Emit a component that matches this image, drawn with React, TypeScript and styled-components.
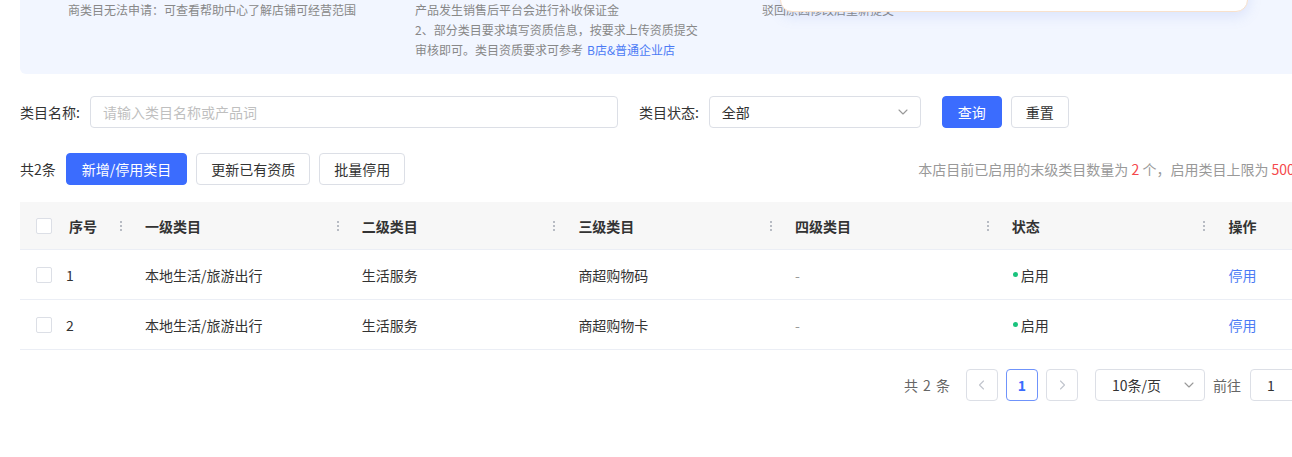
import React from 'react';
import styled, { createGlobalStyle } from 'styled-components';

const GlobalStyle = createGlobalStyle`
  html, body {
    margin: 0;
    padding: 0;
    overflow: hidden;
    background: #fff;
  }
  body {
    font-family: "Noto Sans CJK SC", "Noto Sans", sans-serif;
    color: #333;
  }
  * {
    box-sizing: border-box;
  }
`;

const BLUE = '#3b6cfe';

const Page = styled.div`
  width: 1332px;
  padding: 0 20px;
`;

const NoticePanel = styled.section`
  position: relative;
  display: grid;
  grid-template-columns: repeat(3, 347px);
  padding: 0 0 14px 48px;
  background: #f2f6ff;
  border-radius: 0 0 6px 6px;
  font-size: 12px;
  line-height: 20px;
  color: #888;
`;

const NoticeCol = styled.div`
  white-space: nowrap;
`;

const NoticeLink = styled.a`
  color: #4c7bf5;
  text-decoration: none;
  margin-left: 4px;
`;

const FloatCard = styled.div`
  position: absolute;
  left: 760px;
  top: -40px;
  width: 468px;
  height: 52px;
  background: #fff;
  border: 1px solid #f8e1cc;
  border-radius: 12px;
  box-shadow: 0 4px 14px rgba(110, 140, 230, 0.18);
`;

const FormRow = styled.div`
  display: flex;
  align-items: center;
  margin-top: 22px;
  height: 32px;
`;

const Field = styled.label`
  display: flex;
  align-items: center;
  gap: 10px;
  font-size: 14px;
  color: #333;
  margin-right: 21px;
`;

const TextInput = styled.div<{ $w: number }>`
  width: ${(p) => p.$w}px;
  height: 32px;
  border: 1px solid #dcdfe6;
  border-radius: 4px;
  display: flex;
  align-items: center;
  justify-content: space-between;
  padding: 0 10px 0 12px;
  font-size: 14px;
  color: #333;
  background: #fff;
`;

const Placeholder = styled.span`
  color: #bfbfbf;
`;

const Button = styled.button<{ $primary?: boolean }>`
  height: 32px;
  padding: 0 ${(p) => (p.$primary ? 15 : 14)}px;
  border-radius: 4px;
  font-family: inherit;
  font-size: 14px;
  cursor: pointer;
  border: 1px solid ${(p) => (p.$primary ? BLUE : '#dcdfe6')};
  background: ${(p) => (p.$primary ? BLUE : '#fff')};
  color: ${(p) => (p.$primary ? '#fff' : '#333')};
`;

const ButtonGroup = styled.div`
  display: flex;
  gap: 9px;
`;

const ActionRow = styled.div`
  display: flex;
  align-items: center;
  margin-top: 25px;
  height: 32px;
  gap: 9px;
  font-size: 14px;
`;

const Summary = styled.div`
  margin-left: auto;
  color: #999;
  white-space: nowrap;
`;

const Red = styled.span`
  color: #f5484c;
`;

const Table = styled.div`
  margin-top: 17px;
  font-size: 14px;
`;

const TableRow = styled.div<{ $head?: boolean }>`
  display: grid;
  grid-template-columns: 109px repeat(5, 216.7px) 1fr;
  height: ${(p) => (p.$head ? 48 : 50)}px;
  align-items: center;
  background: ${(p) => (p.$head ? '#f7f7f7' : '#fff')};
  border-bottom: 1px solid #ebeef5;
  font-weight: ${(p) => (p.$head ? 600 : 400)};
  color: #333;
`;

const Cell = styled.div<{ $muted?: boolean; $link?: boolean }>`
  position: relative;
  display: flex;
  align-items: center;
  padding-left: 16px;
  height: 100%;
  white-space: nowrap;
  color: ${(p) => (p.$link ? '#4c7bf5' : p.$muted ? '#999' : 'inherit')};
`;

const SelectCell = styled(Cell)<{ $head?: boolean }>`
  gap: ${(p) => (p.$head ? 17 : 14)}px;
`;

const StatusCell = styled(Cell)`
  padding-left: 17px;
`;

const Divider = styled.span`
  position: absolute;
  right: 7px;
  top: 18px;
  width: 2px;
  height: 12px;
  background: radial-gradient(circle, #b8bcc4 45%, transparent 55%) 0 0 / 2px 4px repeat-y;
`;

const Checkbox = styled.span`
  display: inline-block;
  width: 16px;
  height: 16px;
  border: 1px solid #dcdfe6;
  border-radius: 2px;
  background: #fff;
  flex-shrink: 0;
`;

const StatusDot = styled.span`
  display: inline-block;
  width: 5px;
  height: 5px;
  border-radius: 50%;
  background: #19c37d;
  margin-right: 3px;
`;

const Pager = styled.div`
  display: flex;
  align-items: center;
  justify-content: flex-end;
  margin-top: 19px;
  margin-right: -6px;
  height: 32px;
  font-size: 14px;
  color: #666;
`;

const PagerTotal = styled.span`
  margin-right: 16px;
  word-spacing: 2px;
`;

const PageBtn = styled.div<{ $active?: boolean }>`
  width: 32px;
  height: 32px;
  border-radius: 4px;
  border: 1px solid ${(p) => (p.$active ? '#6f93fb' : '#dcdfe6')};
  color: ${(p) => (p.$active ? BLUE : '#b4b4b4')};
  font-weight: ${(p) => (p.$active ? 600 : 400)};
  display: flex;
  align-items: center;
  justify-content: center;
  margin-right: 8px;
  background: #fff;
`;

const PagerSelect = styled.div`
  width: 110px;
  height: 32px;
  border: 1px solid #dcdfe6;
  border-radius: 4px;
  display: flex;
  align-items: center;
  justify-content: space-between;
  padding: 0 8px 0 16px;
  margin-left: 9px;
  color: #333;
`;

const JumpLabel = styled.span`
  margin: 0 9px 0 8px;
`;

const JumpInput = styled.div`
  width: 46px;
  height: 32px;
  border: 1px solid #dcdfe6;
  border-radius: 4px;
  display: flex;
  align-items: center;
  padding-left: 16px;
  color: #333;
  margin-right: 8px;
`;

const Chevron = ({ dir = 'down', color = '#999' }: { dir?: 'down' | 'left' | 'right'; color?: string }) => {
  const d = dir === 'down' ? 'M3 5l4 4 4-4' : dir === 'left' ? 'M8.5 3L4.5 7l4 4' : 'M5.5 3l4 4-4 4';
  return (
    <svg width="14" height="14" viewBox="0 0 14 14" fill="none">
      <path d={d} stroke={color} strokeWidth="1.1" strokeLinecap="round" strokeLinejoin="round" />
    </svg>
  );
};

const headers = ['一级类目', '二级类目', '三级类目', '四级类目', '状态', '操作'];

const rows = [
  { id: 1, l1: '本地生活/旅游出行', l2: '生活服务', l3: '商超购物码', l4: '-' },
  { id: 2, l1: '本地生活/旅游出行', l2: '生活服务', l3: '商超购物卡', l4: '-' },
];

const App = () => (
  <Page>
    <GlobalStyle />
    <NoticePanel>
      <NoticeCol>商类目无法申请：可查看帮助中心了解店铺可经营范围</NoticeCol>
      <NoticeCol>
        产品发生销售后平台会进行补收保证金
        <br />
        2、部分类目要求填写资质信息，按要求上传资质提交
        <br />
        审核即可。类目资质要求可参考
        <NoticeLink>B店&amp;普通企业店</NoticeLink>
      </NoticeCol>
      <NoticeCol>驳回原因修改后重新提交</NoticeCol>
      <FloatCard />
    </NoticePanel>

    <FormRow>
      <Field>
        类目名称:
        <TextInput $w={528}>
          <Placeholder>请输入类目名称或产品词</Placeholder>
        </TextInput>
      </Field>
      <Field>
        类目状态:
        <TextInput $w={212}>
          全部
          <Chevron />
        </TextInput>
      </Field>
      <ButtonGroup>
        <Button $primary>查询</Button>
        <Button>重置</Button>
      </ButtonGroup>
    </FormRow>

    <ActionRow>
      <span style={{ marginRight: 1 }}>共2条</span>
      <Button $primary>新增/停用类目</Button>
      <Button>更新已有资质</Button>
      <Button>批量停用</Button>
      <Summary>
        本店目前已启用的末级类目数量为 <Red>2</Red> 个，启用类目上限为 <Red>500</Red> 个
      </Summary>
    </ActionRow>

    <Table>
      <TableRow $head>
        <SelectCell $head>
          <Checkbox />
          序号
          <Divider />
        </SelectCell>
        {headers.map((h, i) => (
          <Cell key={h}>
            {h}
            {i < headers.length - 1 && <Divider />}
          </Cell>
        ))}
      </TableRow>
      {rows.map((r) => (
        <TableRow key={r.id}>
          <SelectCell>
            <Checkbox />
            {r.id}
          </SelectCell>
          <Cell>{r.l1}</Cell>
          <Cell>{r.l2}</Cell>
          <Cell>{r.l3}</Cell>
          <Cell $muted>{r.l4}</Cell>
          <StatusCell>
            <StatusDot />
            启用
          </StatusCell>
          <Cell $link>停用</Cell>
        </TableRow>
      ))}
    </Table>

    <Pager>
      <PagerTotal>共 2 条</PagerTotal>
      <PageBtn>
        <Chevron dir="left" color="#c0c4cc" />
      </PageBtn>
      <PageBtn $active>1</PageBtn>
      <PageBtn>
        <Chevron dir="right" color="#c0c4cc" />
      </PageBtn>
      <PagerSelect>
        10条/页
        <Chevron />
      </PagerSelect>
      <JumpLabel>前往</JumpLabel>
      <JumpInput>1</JumpInput>
      <span>页</span>
    </Pager>
  </Page>
);

export default App;
